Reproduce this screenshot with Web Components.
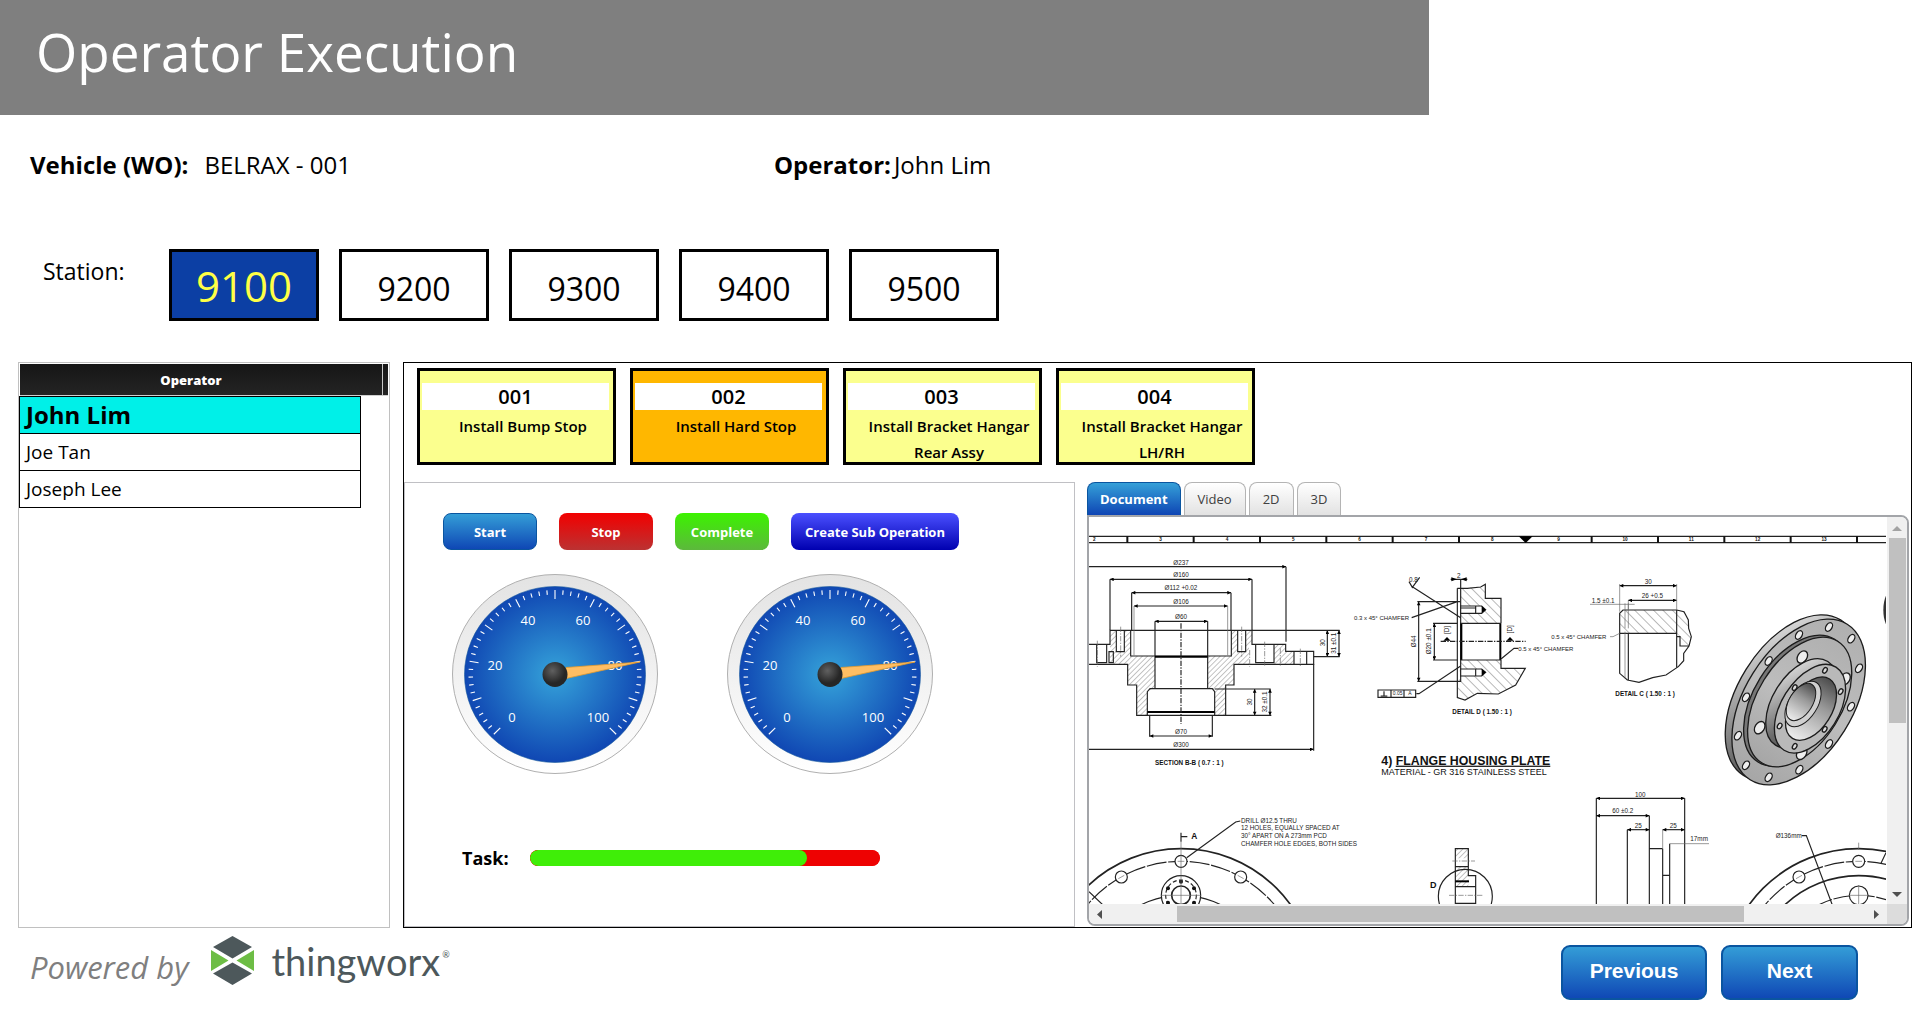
<!DOCTYPE html>
<html lang="en">
<head>
<meta charset="utf-8">
<title>Operator Execution</title>
<style>
  html, body { margin: 0; min-height: 100%; background: #fff; }
  body { font-family: "Open Sans", "Noto Sans", sans-serif; color: #000; }
</style>
</head>
<body>
<operator-page></operator-page>

<script>
const define = (name, html, setup) => {
  const template = document.createElement('template');
  template.innerHTML = html;
  customElements.define(name, class extends HTMLElement {
    constructor() {
      super();
      this.attachShadow({ mode: 'open' }).append(template.content.cloneNode(true));
    }
    connectedCallback() { if (setup) setup(this, this.shadowRoot); }
  });
};

/* ---------- page header ---------- */
define('page-header', `
<style>
  :host { display: block; box-sizing: border-box; width: 74.5%; height: 115px; padding: 17px 0 0 36px; background: #7f7f7f; color: #fff; }
  h1 { margin: 0; font-size: 53px; line-height: 70px; font-weight: 400; white-space: nowrap; }
</style>
<h1><slot></slot></h1>`);

/* ---------- label and value ---------- */
define('info-field', `
<style>
  :host { display: flex; gap: 3px; font-size: 24px; line-height: 32px; white-space: nowrap; }
  :host([spaced]) { gap: 16px; }
  b { font-weight: 700; }
</style>
<b><slot name="label"></slot></b><span><slot></slot></span>`);

/* ---------- station buttons ---------- */
define('station-button', `
<style>
  :host { display: block; }
  button { box-sizing: border-box; width: 150px; height: 72px; padding: 8px 0 0; border: 3px solid #000; background: #fff; color: #000; font: 400 32px/44px "Open Sans", sans-serif; }
  :host([selected]) button { background: #0c3fa4; color: #ffff45; font-size: 42px; padding: 2px 0 0; }
</style>
<button type="button"><slot></slot></button>`);

/* ---------- operator table ---------- */
define('operator-list', `
<style>
  :host { display: block; box-sizing: border-box; border: 1px solid #c0c0c0; padding: 1px 0; }
  .head { display: flex; margin: 0 1px; height: 31px; background: linear-gradient(#161616, #242424); border-bottom: 1px solid #d0d0d0; color: #fff; font: 800 13px/32px "Open Sans", sans-serif; }
  .head span { flex: 1; text-align: center; border-right: 1px solid #c8c8c8; padding-right: 20px; }
  .head i { width: 5px; }
  table { width: 342px; border-collapse: collapse; }
  td { height: 36px; padding: 0 0 0 6px; border: 1px solid #000; font-size: 19px; line-height: 26px; }
  tr.on td { background: #00f0e8; font-size: 24px; font-weight: 700; }
</style>
<div class="head"><span id="h">Operator</span><i></i></div>
<table aria-labelledby="h"><tbody>
  <tr class="on"><td>John Lim</td></tr>
  <tr><td>Joe Tan</td></tr>
  <tr><td>Joseph Lee</td></tr>
</tbody></table>`);

/* ---------- operation card ---------- */
define('operation-card', `
<style>
  :host { display: block; }
  button { display: flex; flex-direction: column; align-items: stretch; box-sizing: border-box; width: 199px; height: 97px; padding: 12px 0 0; border: 3px solid #000; background: #fbff8e; color: #000; font: 600 15px/26px "Open Sans", sans-serif; text-align: center; }
  :host([active]) button { background: #ffb700; }
  .no { margin: 0 4px 0 2px; background: #fff; font-size: 20px; line-height: 27px; }
  .name { display: block; margin-top: 3px; padding: 0 8px 0 21px; height: 48px; }
</style>
<button type="button"><span class="no"><slot name="no"></slot></span><span class="name"><slot></slot></span></button>`);

/* ---------- gradient button ---------- */
define('action-button', `
<style>
  :host { display: block; }
  button { box-sizing: border-box; width: 100%; height: 37px; padding: 0; border: 1px solid var(--edge, transparent); border-radius: 8px; background: linear-gradient(var(--top), var(--bottom)) border-box; color: #fff; font: 700 13px/18px "Open Sans", sans-serif; }
  :host([large]) button { height: 55px; border-width: 2px; border-radius: 9px; font: 700 21px/24px "Liberation Sans", Arial, sans-serif; padding-bottom: 3px; }
</style>
<button type="button"><slot></slot></button>`);

/* ---------- gauge ---------- */
define('gauge-dial', `
<style>
  :host { display: block; }
  svg { display: block; width: 206px; height: 200px; overflow: visible; }
  text { font: 400 13px "Open Sans", sans-serif; fill: #fff; text-anchor: middle; }
</style>
<svg viewBox="0 0 206 200" role="img" aria-label="Gauge at 80">
  <defs>
    <radialGradient id="face"><stop offset="0" stop-color="#35a3da"/><stop offset="1" stop-color="#1047b3"/></radialGradient>
    <linearGradient id="rim" x2="0" y2="1"><stop offset="0" stop-color="#e3e3e3"/><stop offset="1" stop-color="#fff"/></linearGradient>
    <radialGradient id="hub" cx=".4" cy=".35"><stop offset="0" stop-color="#606060"/><stop offset="1" stop-color="#262626"/></radialGradient>
  </defs>
  <ellipse cx="103" cy="100" rx="102.5" ry="99.5" fill="url(#rim)" stroke="#b0b0b0"/>
  <ellipse cx="103" cy="100.500" rx="90.500" ry="88" fill="url(#face)" stroke="#14589c" stroke-width=".6"/>
  <g id="ticks" stroke="#fff" stroke-width="1.100"></g>
  <text x="76" y="51">40</text><text x="131" y="51">60</text>
  <text x="43" y="96">20</text><text x="163" y="96">80</text>
  <text x="60" y="148">0</text><text x="146" y="148">100</text>
  <path d="M114 93.500 188 88 114 104.500z" fill="#ffbe63" stroke="#e59a2c" stroke-width=".8"/>
  <circle cx="103" cy="100.500" r="12.500" fill="url(#hub)"/>
</svg>`, (host, root) => {
  let out = '';
  for (let i = 0; i <= 50; i++) {
    const a = (225 - i * 5.4) * Math.PI / 180, c = Math.cos(a), s = Math.sin(a);
    const inner = i % 5 ? 80 : 75.5;
    out += `<path d="M${103 + c * inner * 1.025} ${100.5 - s * inner}L${103 + c * 86.5} ${100.5 - s * 84.5}"/>`;
  }
  root.getElementById('ticks').innerHTML = out;
});

/* ---------- task progress ---------- */
define('task-progress', `
<style>
  :host { display: flex; align-items: center; gap: 21px; font-size: 18px; line-height: 24px; }
  label { font-weight: 700; }
  progress { -webkit-appearance: none; appearance: none; width: 350px; height: 16px; border: 0; border-radius: 8px; overflow: hidden; background: #ee0202; }
  progress::-webkit-progress-bar { background: #ee0202; border-radius: 8px; }
  progress::-webkit-progress-value { background: #3fee08; border-radius: 8px; }
</style>
<label for="p">Task:</label><progress id="p" max="100" value="79.4"></progress>`);

/* ---------- engineering drawing ---------- */
define('flange-drawing', `
<style>
  :host { display: block; overflow: hidden; background: #fff; }
  svg { display: block; width: 797px; height: 387px; }
  .l { fill: none; stroke: #222; stroke-width: 3.5; }
  .t { fill: none; stroke: #666; stroke-width: 2; }
  .k { fill: none; stroke: #000; stroke-width: 6; }
  .d { stroke-dasharray: 16 4 4 4; }
  .w { fill: #fff; }
  text { font-family: "Liberation Sans", Arial, sans-serif; font-size: 19px; fill: #222; }
  .m { text-anchor: middle; }
  .b { font-weight: 700; fill: #111; }
</style>
<svg viewBox="30 141 2391 1161" role="img" aria-label="Flange housing plate drawing">
  <defs>
    <pattern id="h1" width="11" height="11" patternUnits="userSpaceOnUse" patternTransform="rotate(45)"><path d="M0 0V11" stroke="#888" stroke-width="3"/></pattern>
    <pattern id="h2" width="20" height="20" patternUnits="userSpaceOnUse" patternTransform="rotate(-45)"><path d="M0 0V20" stroke="#888" stroke-width="3.500"/></pattern>
    <marker id="a" viewBox="0 0 10 10" refX="10" refY="5" markerWidth="15" markerHeight="11" markerUnits="userSpaceOnUse" orient="auto-start-reverse"><path d="M0 0 10 5 0 10z"/></marker>
    <linearGradient id="metal"><stop offset="0" stop-color="#a6a6a6"/><stop offset=".5" stop-color="#bdbdbd"/><stop offset="1" stop-color="#b0b0b0"/></linearGradient>
    <linearGradient id="edge" x1="0" y1="1" x2="1" y2="0"><stop offset="0" stop-color="#3c3c3c"/><stop offset=".35" stop-color="#6c6c6c"/><stop offset="1" stop-color="#f2f2f2"/></linearGradient>
    <linearGradient id="bore"><stop offset="0" stop-color="#eee"/><stop offset=".6" stop-color="#999"/><stop offset="1" stop-color="#4c4c4c"/></linearGradient>
  </defs>

  <!-- sheet ruler -->
  <path class="l" d="M30 199H2421M30 218H2421"/>
  <g id="ruler"></g>
  <path d="M1319 199h42l-21 20z"/>

  <!-- section B-B -->
  <path fill="url(#h1)" d="M93 481H112V545H136V481H155V558H228V656L205 662V736H173V645H146V583H93zM519 481H500V545H476V481H457V558H386V656L407 662V736H440V645H465V583H510V523H519zM585 523H620V544H645V583H585z"/>
  <g class="l">
    <path d="M30 523H93V481H519V523H620V544H704V583H465V645H440V736H173V645H146V583H30"/>
    <path d="M155 481V558H457V481M228 454V656M386 454V656M205 735V665L213 656H400L407 665V735M112 481V545H136V481M476 481V545H500V481M530 523V578H585V523M645 544V583M683 544V583M53 523V578H83V523M90 545V578H103V545z"/>
  </g>
  <path class="k" d="M228 560H386M205 726H407"/>
  <g class="l">
    <path marker-end="url(#a)" d="M10 290H621"/><path marker-start="url(#a)" marker-end="url(#a)" d="M93 328H519"/>
    <path marker-start="url(#a)" marker-end="url(#a)" d="M158 368H456"/><path marker-start="url(#a)" marker-end="url(#a)" d="M165 408H446"/>
    <path marker-start="url(#a)" marker-end="url(#a)" d="M228 454H386"/><path marker-start="url(#a)" marker-end="url(#a)" d="M212 798H400"/>
    <path marker-end="url(#a)" d="M10 838H704"/>
    <path marker-start="url(#a)" marker-end="url(#a)" d="M745 481V560"/><path marker-start="url(#a)" marker-end="url(#a)" d="M780 481V560"/>
    <path marker-start="url(#a)" marker-end="url(#a)" d="M527 657V736"/><path marker-start="url(#a)" marker-end="url(#a)" d="M573 657V736"/>
  </g>
  <path class="l" d="M621 290V515M93 328V480M519 328V480M158 368V480M456 368V480M212 736V800M400 736V800M704 583V842M519 481H782M704 560H782M407 657H575M440 736H577"/>
  <path class="t" d="M165 408V556M446 408V556"/>
  <path class="l d" d="M306 460V762"/><path class="t d" d="M125 470V560M488 470V560M512 540V590M557 515V588M604 535V590M664 536V590M55 512V590"/>
  <text class="m" x="306" y="284">Ø237</text><text class="m" x="306" y="322">Ø160</text><text class="m" x="306" y="360">Ø112 +0.02</text>
  <text class="m" x="306" y="401">Ø106</text><text class="m" x="306" y="446">Ø60</text><text class="m" x="306" y="791">Ø70</text><text class="m" x="306" y="832">Ø300</text>
  <text class="m" transform="translate(738 518) rotate(-90)">30</text><text class="m" transform="translate(772 520) rotate(-90)">31 ±0.1</text>
  <text class="m" transform="translate(520 696) rotate(-90)">30</text><text class="m" transform="translate(565 696) rotate(-90)">32 ±0.1</text>
  <text class="b" x="228" y="886">SECTION B-B ( 0.7 : 1 )</text>

  <!-- detail D -->
  <path fill="url(#h2)" d="M1145 355 1205 351 1219 343V385H1266V460H1145zM1145 570H1266V595H1339L1310 645 1258 672 1195 670 1158 690 1135 683z"/>
  <path class="l" d="M1135 355H1165L1205 351 1219 343V385H1266V460M1266 570V595H1339L1310 645 1258 672 1195 670 1158 690 1135 683V355M1145 395V634H1135"/>
  <path class="k" d="M1147 460V570M1264 460V570"/><path class="l" d="M1145 460H1266M1145 570H1266"/>
  <path class="l w" d="M1145 408H1208L1220 419 1208 430H1145zM1145 597H1208L1220 607 1208 618H1145z"/><path d="M1208 408 1220 419 1208 430zM1208 597 1220 607 1208 618z"/><path class="l" d="M1190 408V430M1190 597V618M1145 414H1190"/>
  <path class="l d" d="M1085 514H1340"/><path d="M1093 512 1104 501 1115 512zM1282 512 1293 501 1304 512z"/>
  <path class="l" d="M1019 395V634" marker-start="url(#a)" marker-end="url(#a)"/><path class="l" d="M1066 460V570" marker-start="url(#a)" marker-end="url(#a)"/>
  <path class="l" d="M1015 395H1145M1015 634H1135M1062 460H1135M1062 570H1135M998 443 1135 395M990 335 1000 352 1022 322M1000 350 1145 443M1115 328H1165M1145 328V395M1012 671H1020L1145 588M1266 567 1305 535H1318"/>
  <path d="M1117 322 1134 328 1117 334zM1163 322 1146 328 1163 334z"/>
  <path class="l" d="M897 660H1010V682H897zM936 660V682M975 660V682M915 664V678M905 678H925"/>
  <text class="m" x="956" y="676" style="font-size:15px">0.05</text><text class="m" x="993" y="676" style="font-size:15px">A</text>
  <text class="m" x="1139" y="323">2</text><text x="990" y="337">0.8</text>
  <text class="m" transform="translate(1012 514) rotate(-90)">Ø44</text><text class="m" transform="translate(1056 514) rotate(-90)">Ø20 ±0.1</text>
  <text class="m" transform="translate(1110 480) rotate(-90)">[D]</text><text class="m" transform="translate(1298 478) rotate(-90)">[D]</text>
  <text x="825" y="449" style="font-size:18px">0.3 x 45° CHAMFER</text><text x="1318" y="543" style="font-size:18px">0.5 x 45° CHAMFER</text>
  <text class="b" x="1120" y="731">DETAIL D ( 1.50 : 1 )</text>

  <!-- detail C -->
  <path fill="url(#h2)" d="M1622 490V430L1632 420H1793L1815 425 1828 450 1829 475 1837 500 1830 528H1803V500L1793 490z"/>
  <path class="l" d="M1622 610V430L1632 420H1793L1815 425 1828 450 1829 475 1837 500 1830 528 1814 550V572L1798 590 1761 615 1721 623 1680 637 1645 630zM1622 490H1793M1648 490V630M1793 420V592M1793 500H1803V528H1830"/>
  <path class="t" d="M1638 485V625M1638 400V475M1648 400V475"/>
  <path class="l" d="M1622 347H1793" marker-start="url(#a)" marker-end="url(#a)"/><path class="l" d="M1648 391H1793" marker-start="url(#a)" marker-end="url(#a)"/>
  <path class="t" d="M1622 342V425M1793 342V420M1648 391V420M1533 403H1667M1593 500H1602L1622 490"/>
  <text class="m" x="1708" y="342">30</text><text class="m" x="1720" y="384">26 +0.5</text><text x="1538" y="399">1.5 ±0.1</text>
  <text x="1417" y="506" style="font-size:18px">0.5 x 45° CHAMFER</text><text class="b" x="1609" y="679">DETAIL C ( 1.50 : 1 )</text>

  <!-- sheet title -->
  <text class="b" x="907" y="884" style="font-size:37px">4) <tspan text-decoration="underline">FLANGE HOUSING PLATE</tspan></text>
  <text x="907" y="915" style="font-size:27px;fill:#111">MATERIAL - GR 316 STAINLESS STEEL</text>

  <!-- isometric flange -->
  <g stroke="#1c1c1c" stroke-width="4">
    <ellipse rx="275" ry="162" transform="translate(2139 683) rotate(-58)" fill="url(#edge)"/>
    <ellipse rx="275" ry="162" transform="translate(2159 696) rotate(-58)" fill="url(#metal)"/>
    <ellipse rx="217" ry="128" transform="translate(2152 692) rotate(-58)" fill="#777"/>
    <ellipse rx="215" ry="126" transform="translate(2162 696) rotate(-58)" fill="url(#metal)"/>
    <g id="holes" fill="#eee"></g>
    <ellipse rx="148" ry="87" transform="translate(2168 700) rotate(-58)" fill="url(#edge)"/>
    <ellipse rx="147" ry="86" transform="translate(2193 716) rotate(-58)" fill="#b9b9b9"/>
    <ellipse rx="105" ry="62" transform="translate(2196 716) rotate(-58)" fill="url(#bore)"/>
    <ellipse rx="76" ry="43" transform="translate(2172 702) rotate(-58)" fill="#d0d0d0" stroke-width="3"/>
    <ellipse rx="62" ry="35" transform="translate(2166 696) rotate(-58)" fill="url(#bore)" stroke-width="3"/>
    <g id="bolts" fill="#ddd"></g>
  </g>
  <ellipse cx="2442" cy="420" rx="29" ry="62" fill="#333"/>

  <!-- front view, lower left -->
  <g class="l">
    <circle cx="306" cy="1541" r="405" style="stroke-width:5"/><circle cx="306" cy="1541" r="367" stroke-dasharray="60 5"/><circle cx="306" cy="1541" r="265"/>
    <g class="w"><circle cx="306" cy="1174" r="18"/><circle cx="127" cy="1221" r="18"/><circle cx="485" cy="1221" r="18"/><circle cx="306" cy="1276" r="59"/></g>
    <circle cx="306" cy="1276" r="46" stroke-dasharray="12 7"/><circle cx="306" cy="1276" r="28" style="stroke-width:5"/>
    <path d="M323 1163 470 1056 484 1053M306 1088V1115M306 1100H325M30 1265 72 1305"/>
  </g>
  <g fill="#111"><circle cx="306" cy="1235" r="6"/><circle cx="267" cy="1255" r="6"/><circle cx="345" cy="1255" r="6"/><circle cx="267" cy="1298" r="6"/><circle cx="345" cy="1298" r="6"/></g>
  <path class="t" d="M306 1115V1305M246 1276H366M296 1174H316M118 1226 136 1216M476 1216 494 1226"/>
  <text class="b" x="337" y="1107" style="font-size:25px">A</text>
  <text x="486" y="1059">DRILL Ø12.5 THRU</text><text x="486" y="1081">12 HOLES, EQUALLY SPACED AT</text>
  <text x="486" y="1104">30° APART ON A 273mm PCD</text><text x="486" y="1127">CHAMFER HOLE EDGES, BOTH SIDES</text>

  <!-- side view -->
  <path fill="url(#h1)" d="M1129 1136H1168V1165H1129zM1129 1190H1168V1215H1129zM1129 1215H1168V1250H1129z"/>
  <path class="l" d="M1129 1305V1136H1168V1217H1190V1305M1129 1190H1168M1129 1250H1190M1129 1300H1190"/><path class="k" d="M1129 1234H1170"/>
  <circle class="l" cx="1159" cy="1279" r="81"/><path class="t d" d="M1120 1173H1188M1110 1276H1210"/>
  <text class="b" x="1053" y="1254" style="font-size:27px">D</text>

  <!-- stepped view -->
  <path class="l" d="M1552 985V1305M1817 985V1305M1711 1037V1305M1645 1079V1305M1751 1136V1305M1772 1121V1305M1711 1136H1751M1751 1216H1772"/>
  <path class="t" d="M1751 1079V1136M1772 1121H1890"/>
  <path class="l" d="M1552 985H1817" marker-start="url(#a)" marker-end="url(#a)"/><path class="l" d="M1552 1037H1711" marker-start="url(#a)" marker-end="url(#a)"/>
  <path class="l" d="M1645 1079H1711" marker-start="url(#a)" marker-end="url(#a)"/><path class="l" d="M1751 1079H1817" marker-start="url(#a)" marker-end="url(#a)"/>
  <text class="m" x="1684" y="980">100</text><text class="m" x="1631" y="1028">60 ±0.2</text><text class="m" x="1678" y="1074">25</text><text class="m" x="1783" y="1074">25</text><text x="1834" y="1113">17mm</text>

  <!-- rear view, lower right -->
  <g class="l">
    <circle cx="2339" cy="1541" r="405" style="stroke-width:5"/><circle cx="2339" cy="1541" r="367" stroke-dasharray="60 5"/><circle cx="2339" cy="1541" r="324" style="stroke-width:5"/><circle cx="2339" cy="1541" r="265" stroke-dasharray="60 5"/>
    <g class="w"><circle cx="2339" cy="1174" r="18"/><circle cx="2160" cy="1221" r="18"/><circle cx="2339" cy="1276" r="28"/></g>
    <path d="M2168 1097H2182L2260 1305M2406 1180 2421 1148"/>
  </g>
  <path class="t" d="M2339 1118V1140M2339 1245V1305M2310 1276H2368M2329 1174H2349M2151 1226 2169 1216"/>
  <text x="2090" y="1103">Ø136mm</text>
</svg>`, (host, root) => {
  let out = '';
  for (let i = 0; i < 12; i++) {
    const x = 145 + i * 199;
    if (i !== 6) out += `<path d="M${x} 199V218" stroke="#111" stroke-width="6"/>`;
    out += `<text x="${x - 99}" y="214" class="m b" style="font-size:14px">${i + 2}</text>`;
  }
  root.getElementById('ruler').innerHTML = out;
  const disc = (x, y, a, b) => `<ellipse rx="${a}" ry="${b}" transform="translate(${x} ${y}) rotate(-58)"/>`;
  const ring = [[2250,471],[2317,506],[2340,595],[2316,710],[2250,822],[2161,899],[2069,922],[2001,886],[1977,797],[2001,682],[2069,573],[2160,495]];
  const mid = [[2170,561],[2042,773],[2168,850],[2298,627]];
  root.getElementById('holes').innerHTML = ring.map(p => disc(...p, 14, 9)).join('') + mid.map(p => disc(...p, 20, 14)).join('');
  const bolts = [[2238,601],[2285,665],[2237,778],[2147,829],[2102,768],[2147,653]];
  root.getElementById('bolts').innerHTML = bolts.map(p => disc(...p, 9, 6)).join('');
});

/* ---------- tabbed viewer ---------- */
define('document-viewer', `
<style>
  :host { display: flex; flex-direction: column; min-width: 0; }
  .tabs { display: flex; gap: 3px; }
  .tabs button { box-sizing: border-box; height: 33px; padding: 0 13px; border: 1px solid #b4b4b4; border-bottom: 0; border-radius: 8px 8px 0 0; background: linear-gradient(#fff, #e2e2e2); color: #404040; font: 400 13px/18px "Open Sans", sans-serif; }
  .tabs button.on { padding: 0 12px; background: linear-gradient(#35a0d8, #0e45b4); border-color: #0a55a0; color: #fff; font-weight: 700; }
  .view { flex: 1; display: grid; grid-template-columns: minmax(0, 1fr) 20px; grid-template-rows: minmax(0, 1fr) 20px; border: 2px solid #a3a5a9; border-radius: 0 8px 8px 8px; overflow: hidden; }
  .v, .h { display: flex; align-items: center; background: #f0f0f0; }
  .v { flex-direction: column; }
  .v i { width: 17px; height: 185px; background: #c0c0c0; }
  .h i { height: 16px; flex: 0 0 71%; background: #c0c0c0; }
  .corner { background: #dcdcdc; }
  svg { display: block; flex: none; }
  .v svg { width: 10px; height: 5px; margin: 9px 0 7px; }
  .h svg { width: 5px; height: 9px; margin: 0 8px; }
  .s { flex: 1; }
  .h .gap { flex: 0 0 67px; }
</style>
<div class="tabs" role="tablist">
  <button type="button" role="tab" class="on">Document</button><button type="button" role="tab">Video</button><button type="button" role="tab">2D</button><button type="button" role="tab">3D</button>
</div>
<div class="view">
  <flange-drawing></flange-drawing>
  <div class="v"><svg viewBox="0 0 10 5"><path d="M0 5 5 0 10 5z" fill="#a3a3a3"/></svg><i></i><span class="s"></span><svg viewBox="0 0 10 5"><path d="M0 0 5 5 10 0z" fill="#505050"/></svg></div>
  <div class="h"><svg viewBox="0 0 5 9"><path d="M5 0 0 4.500 5 9z" fill="#505050"/></svg><span class="gap"></span><i></i><span class="s"></span><svg viewBox="0 0 5 9"><path d="M0 0 5 4.500 0 9z" fill="#505050"/></svg></div>
  <div class="corner"></div>
</div>`);

/* ---------- brand ---------- */
define('brand-mark', `
<style>
  :host { display: flex; align-items: flex-start; color: #4d585b; }
  em { margin: 11px 23px 0 0; font-size: 31px; line-height: 40px; color: #7f7f7f; }
  svg { width: 43px; height: 49px; margin-right: 17px; }
  b { margin-top: 3px; font: 400 38px/44px Lato, sans-serif; }
  sup { margin: 9px 0 0 2px; font: 400 9px/20px Lato, sans-serif; }
</style>
<em>Powered by</em>
<svg viewBox="0 0 43 49" role="img" aria-label="ThingWorx logo">
  <path d="M21.500 0 41 11 21.500 22.500 2 11zM21.500 26.500 41 37.500 21.500 49 2 37.500z" fill="#4d585b"/>
  <path d="M0 14 17.500 24.500 0 35zM43 14 25.500 24.500 43 35z" fill="#6dbd45"/>
</svg>
<b>thingworx</b><sup>®</sup>`);

/* ---------- whole page ---------- */
define('operator-page', `
<style>
  :host { display: flex; flex-direction: column; min-height: 100vh; }
  .info { display: grid; grid-template-columns: 744fr 1144fr; padding: 34px 0 0 30px; }
  .stations { display: flex; gap: 20px; margin-top: 68px; padding-left: 43px; font-size: 23px; line-height: 32px; }
  .stations > span { width: 106px; padding-top: 6px; }
  main { flex: 1; display: grid; grid-template-columns: 372px minmax(0, 1fr); gap: 13px; margin-top: 41px; padding: 0 6px 0 18px; }
  .work { display: flex; flex-direction: column; box-sizing: border-box; border: 1px solid #000; padding-top: 5px; }
  .cards { display: flex; gap: 14px; padding-left: 13px; }
  .panes { flex: 1; display: grid; grid-template-columns: 671fr 822fr; gap: 12px; margin-top: 17px; padding-right: 2px; }
  .control { border: 1px solid #c0c0c4; }
  .buttons { display: grid; grid-template-columns: 94px 94px 94px 168px; gap: 22px; padding: 30px 0 0 38px; }
  .gauges { display: flex; gap: 69px; padding: 24px 0 0 47px; }
  task-progress { padding: 72px 0 0 57px; }
  document-viewer { margin-bottom: 1px; }
  footer { display: flex; align-items: flex-start; box-sizing: border-box; height: 82px; padding: 8px 60px 0 30px; }
  nav { display: flex; gap: 14px; margin: 9px 0 0 auto; }
  .blue { --top: #35a0d8; --bottom: #0e45b4; --edge: #0a55a0; }
  .red { --top: #f20000; --bottom: #bb3232; }
  .green { --top: #3cf300; --bottom: #5cb83c; }
  .violet { --top: #4b50ff; --bottom: #0000b0; }
  .prev { width: 146px; }
  .next { width: 137px; }
</style>
<page-header>Operator Execution</page-header>
<section class="info">
  <info-field spaced><span slot="label">Vehicle (WO):</span>BELRAX - 001</info-field>
  <info-field><span slot="label">Operator:</span>John Lim</info-field>
</section>
<section class="stations">
  <span>Station:</span>
  <station-button selected>9100</station-button>
  <station-button>9200</station-button>
  <station-button>9300</station-button>
  <station-button>9400</station-button>
  <station-button>9500</station-button>
</section>
<main>
  <operator-list></operator-list>
  <section class="work">
    <div class="cards">
      <operation-card><span slot="no">001</span>Install Bump Stop</operation-card>
      <operation-card active><span slot="no">002</span>Install Hard Stop</operation-card>
      <operation-card><span slot="no">003</span>Install Bracket Hangar Rear Assy</operation-card>
      <operation-card><span slot="no">004</span>Install Bracket Hangar LH/RH</operation-card>
    </div>
    <div class="panes">
      <div class="control">
        <div class="buttons">
          <action-button class="blue">Start</action-button>
          <action-button class="red">Stop</action-button>
          <action-button class="green">Complete</action-button>
          <action-button class="violet">Create Sub Operation</action-button>
        </div>
        <div class="gauges"><gauge-dial></gauge-dial><gauge-dial></gauge-dial></div>
        <task-progress></task-progress>
      </div>
      <document-viewer></document-viewer>
    </div>
  </section>
</main>
<footer>
  <brand-mark></brand-mark>
  <nav>
    <action-button large class="blue prev">Previous</action-button>
    <action-button large class="blue next">Next</action-button>
  </nav>
</footer>`);
</script>
</body>
</html>
